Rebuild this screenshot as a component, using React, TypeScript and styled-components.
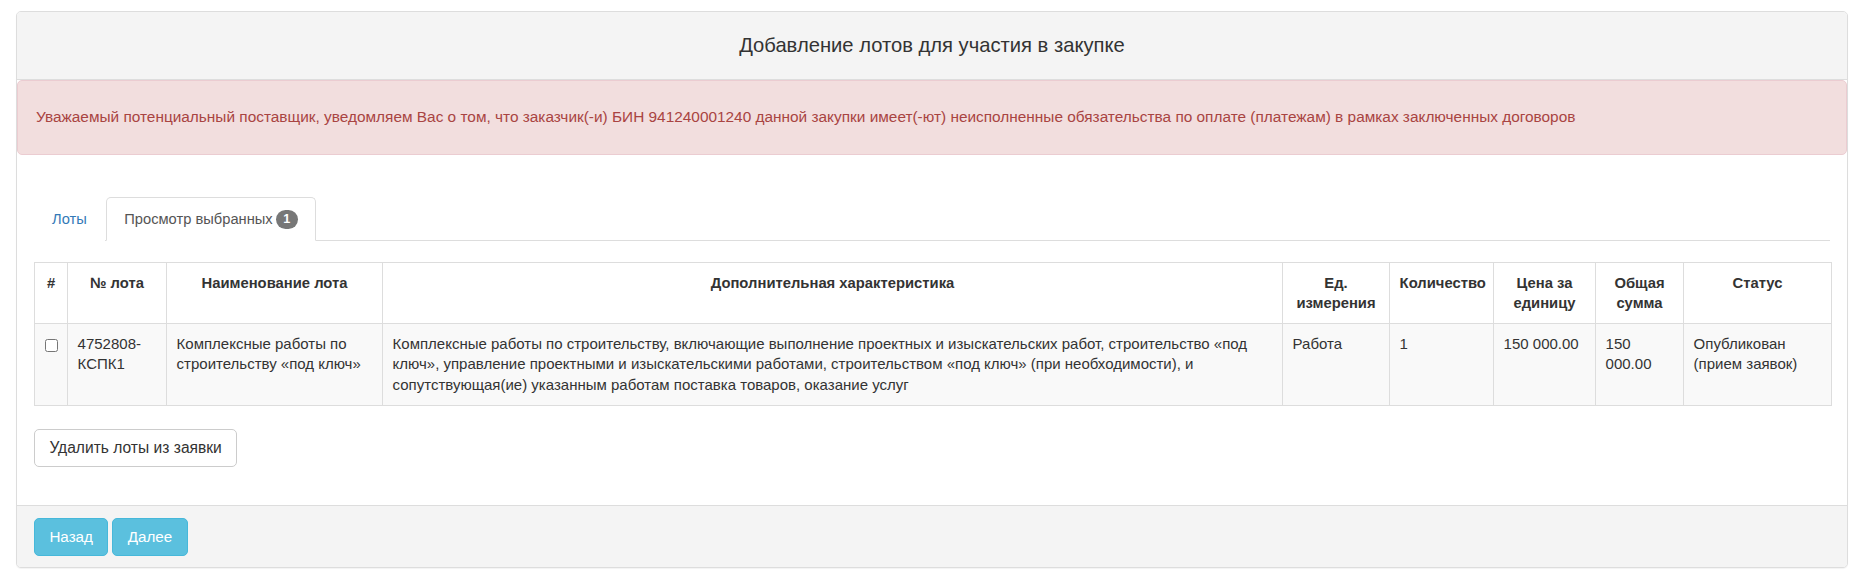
import styled, { createGlobalStyle } from 'styled-components';

const GlobalStyle = createGlobalStyle`
  * {
    box-sizing: border-box;
  }
  body {
    margin: 0;
    background: #fff;
    color: #333;
    font-family: 'Liberation Sans', Arial, sans-serif;
    font-size: 15px;
    line-height: 20.57px;
  }
`;

interface Lot {
  number: string;
  name: string;
  description: string;
  unit: string;
  quantity: string;
  price: string;
  total: string;
  status: string;
}

const lots: Lot[] = [
  {
    number: '4752808-КСПК1',
    name: 'Комплексные работы по строительству «под ключ»',
    description:
      'Комплексные работы по строительству, включающие выполнение проектных и изыскательских работ, строительство «под ключ», управление проектными и изыскательскими работами, строительством «под ключ» (при необходимости), и сопутствующая(ие) указанным работам поставка товаров, оказание услуг',
    unit: 'Работа',
    quantity: '1',
    price: '150 000.00',
    total: '150 000.00',
    status: 'Опубликован (прием заявок)',
  },
];

const columns = [
  { title: '#', width: 33 },
  { title: '№ лота', width: 99 },
  { title: 'Наименование лота', width: 216 },
  { title: 'Дополнительная характеристика', width: 900 },
  { title: 'Ед. измерения', width: 107 },
  { title: 'Количество', width: 104 },
  { title: 'Цена за единицу', width: 102 },
  { title: 'Общая сумма', width: 88 },
  { title: 'Статус', width: 148 },
];

export default function App() {
  return (
    <>
      <GlobalStyle />
      <StyledPage>
        <StyledPanel>
          <StyledPanelHeading>Добавление лотов для участия в закупке</StyledPanelHeading>

          <StyledAlert>
            Уважаемый потенциальный поставщик, уведомляем Вас о том, что заказчик(-и) БИН 941240001240 данной
            закупки имеет(-ют) неисполненные обязательства по оплате (платежам) в рамках заключенных договоров
          </StyledAlert>

          <StyledPanelBody>
            <StyledTabs>
              <StyledTab>Лоты</StyledTab>
              <StyledTab $active>
                Просмотр выбранных <StyledBadge>1</StyledBadge>
              </StyledTab>
            </StyledTabs>

            <StyledTable>
              <colgroup>
                {columns.map((col) => (
                  <StyledCol key={col.title} $width={col.width} />
                ))}
              </colgroup>
              <thead>
                <tr>
                  {columns.map((col) => (
                    <th key={col.title}>{col.title}</th>
                  ))}
                </tr>
              </thead>
              <tbody>
                {lots.map((lot) => (
                  <tr key={lot.number}>
                    <td>
                      <StyledCheckbox type='checkbox' />
                    </td>
                    <td>{lot.number}</td>
                    <td>{lot.name}</td>
                    <td>{lot.description}</td>
                    <td>{lot.unit}</td>
                    <td>{lot.quantity}</td>
                    <td>{lot.price}</td>
                    <td>{lot.total}</td>
                    <td>{lot.status}</td>
                  </tr>
                ))}
              </tbody>
            </StyledTable>

            <StyledButton>Удалить лоты из заявки</StyledButton>
          </StyledPanelBody>

          <StyledPanelFooter>
            <StyledButton $variant='info'>Назад</StyledButton>
            <StyledButton $variant='info'>Далее</StyledButton>
          </StyledPanelFooter>
        </StyledPanel>
      </StyledPage>
    </>
  );
}

const StyledPage = styled.div`
  padding: 11px 19px 6px 16px;
`;

const StyledPanel = styled.div`
  border: 1px solid #ddd;
  border-radius: 5px;
  background: #fff;
  box-shadow: 0 1px 1px rgba(0, 0, 0, 0.05);
  overflow: hidden;
`;

const StyledPanelHeading = styled.div`
  height: 68px;
  display: flex;
  align-items: center;
  justify-content: center;
  background: #f4f4f4;
  border-bottom: 1px solid #ddd;
  font-size: 20.2px;
  color: #333;
`;

const StyledAlert = styled.div`
  height: 75px;
  display: flex;
  align-items: center;
  padding: 0 18px;
  background: #f2dede;
  border: 1px solid #ebccd1;
  border-radius: 5px;
  color: #a94442;
  font-size: 15.4px;
`;

const StyledPanelBody = styled.div`
  padding: 42px 17px 38px 17px;
`;

const StyledTabs = styled.ul`
  display: flex;
  margin: 0 0 21px;
  padding: 0;
  list-style: none;
  border-bottom: 1px solid #ddd;
`;

interface StyledTabProps {
  $active?: boolean;
}

const StyledTab = styled.li<StyledTabProps>`
  display: flex;
  align-items: center;
  gap: 3px;
  height: 44px;
  margin: 0 1.5px -1px 0;
  padding: 0 17px;
  border: 1px solid ${(props) => (props.$active ? '#ddd' : 'transparent')};
  border-bottom-color: ${(props) => (props.$active ? '#fff' : 'transparent')};
  border-radius: 5px 5px 0 0;
  background: #fff;
  color: ${(props) => (props.$active ? '#555' : '#337ab7')};
  font-size: 14.7px;
  cursor: pointer;
`;

const StyledBadge = styled.span`
  display: inline-flex;
  align-items: center;
  justify-content: center;
  min-width: 22px;
  height: 19px;
  padding: 0 7px;
  border-radius: 10px;
  background: #777;
  color: #fff;
  font-size: 12.6px;
  font-weight: bold;
  line-height: 1;
`;

const StyledTable = styled.table`
  width: 100%;
  table-layout: fixed;
  border-collapse: collapse;
  border: 1px solid #ddd;
  margin-bottom: 23px;

  th,
  td {
    border: 1px solid #ddd;
    padding: 9.6px;
    vertical-align: top;
    line-height: 20.57px;
  }

  th {
    text-align: center;
    font-weight: bold;
    font-size: 14.8px;
    background: #fff;
  }

  tbody tr:nth-of-type(odd) {
    background: #f9f9f9;
  }
`;

interface StyledColProps {
  $width: number;
}

const StyledCol = styled.col<StyledColProps>`
  width: ${(props) => props.$width}px;
`;

const StyledCheckbox = styled.input`
  display: block;
  width: 13px;
  height: 13px;
  margin: 5px 0 0;
`;

interface StyledButtonProps {
  $variant?: 'default' | 'info';
}

const StyledButton = styled.button<StyledButtonProps>`
  display: inline-block;
  height: 38px;
  padding: 0 14.4px;
  border: 1px solid ${(props) => (props.$variant === 'info' ? '#46b8da' : '#ccc')};
  border-radius: 5px;
  background: ${(props) => (props.$variant === 'info' ? '#5bc0de' : '#fff')};
  color: ${(props) => (props.$variant === 'info' ? '#fff' : '#333')};
  font-family: inherit;
  font-size: ${(props) => (props.$variant === 'info' ? '15.2px' : '15.6px')};
  line-height: 20.57px;
  cursor: pointer;
`;

const StyledPanelFooter = styled.div`
  display: flex;
  gap: 4px;
  padding: 12px 17px 11px;
  background: #f4f4f4;
  border-top: 1px solid #ddd;
`;
